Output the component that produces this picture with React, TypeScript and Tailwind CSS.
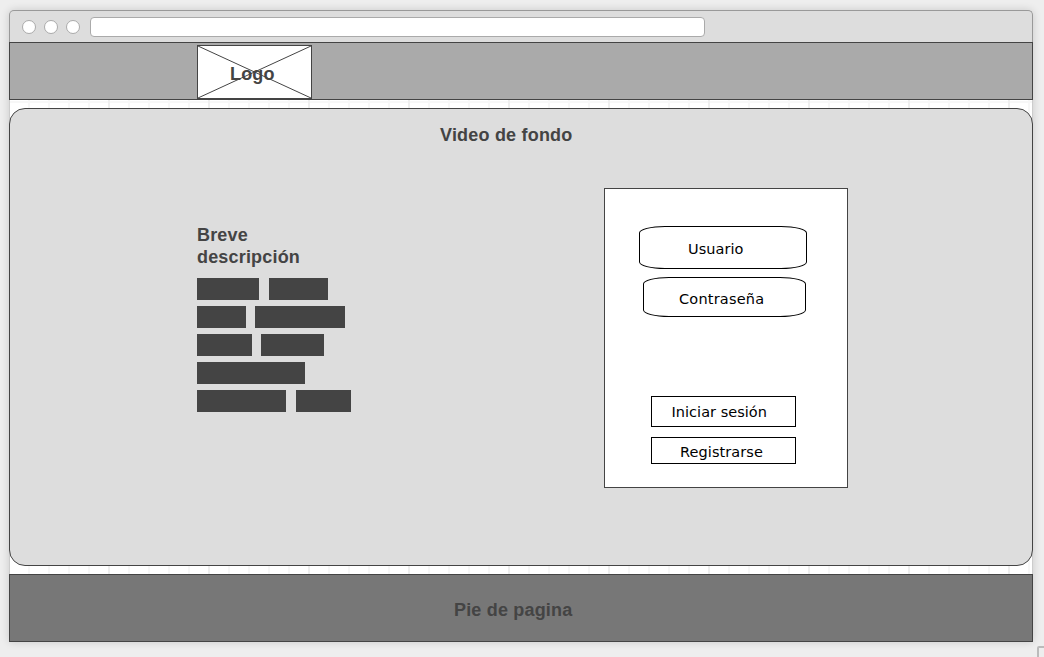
import type { ReactNode } from "react";

const heading = "font-['Liberation_Sans',sans-serif] text-[18px] font-bold leading-[22px] text-[#444444]";

const words: string[][] = [
  ["w-[62px]", "w-[59px] ml-[10px]"],
  ["w-[49px]", "w-[90px] ml-[9px]"],
  ["w-[55px]", "w-[63px] ml-[9px]"],
  ["w-[108px]"],
  ["w-[89px]", "w-[55px] ml-[10px]"],
];

function GridStrip({ top = false }: { top?: boolean }) {
  return (
    <svg className="block h-full w-full" shapeRendering="crispEdges">
      {top && <rect x="0" y="1" width="1022" height="2" fill="#f7f7f7" />}
      {Array.from({ length: 51 }, (_, i) => (
        <rect key={i} x={18 + i * 20} y="0" width="2" height="100%" fill={i % 5 === 4 ? "#eeeeee" : "#f7f7f7"} />
      ))}
    </svg>
  );
}

function Label({ children, className }: { children: ReactNode; className: string }) {
  return (
    <span className={`block whitespace-nowrap font-['DejaVu_Sans',sans-serif] text-[14.5px] leading-[18px] text-black ${className}`}>
      {children}
    </span>
  );
}

function TitleBar() {
  return (
    <div className="flex h-8 items-start rounded-t-[5px] border border-b-0 border-[#999999] bg-[#dddddd] pl-3">
      <div className="mt-[9px] flex gap-2">
        {[0, 1, 2].map((i) => (
          <span key={i} className="h-[14px] w-[14px] rounded-full border border-[#aaaaaa] bg-white" />
        ))}
      </div>
      <div className="ml-[10px] mt-[6px] h-5 w-[615px] rounded-[4px] border border-[#aaaaaa] bg-white" />
    </div>
  );
}

function Logo() {
  return (
    <div className="relative ml-[187px] mt-[2px] h-[54px] w-[115px] border border-[#444444] bg-white">
      <svg className="block h-full w-full" viewBox="0 0 113 52" preserveAspectRatio="none">
        <path d="M0 0L113 52M113 0L0 52" stroke="#444444" strokeWidth="1" />
      </svg>
      <span className={`absolute left-8 top-[17px] tracking-[0.15px] ${heading}`}>Logo</span>
    </div>
  );
}

function Description() {
  return (
    <section className="mt-[115px] w-[160px]">
      <h2 className={`tracking-[0.18px] ${heading}`}>
        Breve
        <br />
        descripción
      </h2>
      <div className="mt-[10px] flex flex-col gap-[6px]">
        {words.map((row, i) => (
          <div key={i} className="flex h-[22px]">
            {row.map((w, j) => (
              <span key={j} className={`bg-[#444444] ${w}`} />
            ))}
          </div>
        ))}
      </div>
    </section>
  );
}

function LoginCard() {
  return (
    <section className="ml-[247px] mt-[79px] h-[300px] w-[244px] border border-[#444444] bg-white">
      <div className="ml-[34px] mt-[37px] h-[43px] w-[168px] rounded-[26px/7px] border border-black pt-[13px]">
        <Label className="ml-[48px] tracking-[0.05px]">Usuario</Label>
      </div>
      <div className="ml-[38px] mt-2 h-10 w-[163px] rounded-[26px/7px] border border-black pt-[12px]">
        <Label className="ml-[35px] tracking-[0.2px]">Contraseña</Label>
      </div>
      <button className="ml-[46px] mt-[79px] block h-[31px] w-[145px] border border-black pt-[1px] text-left">
        <Label className="ml-[19.5px] tracking-[0.03px]">Iniciar sesión</Label>
      </button>
      <button className="ml-[46px] mt-[10px] block h-[27px] w-[145px] border border-black pt-[2px] text-left">
        <Label className="ml-[28px] tracking-[0.08px]">Registrarse</Label>
      </button>
    </section>
  );
}

export default function App() {
  return (
    <div className="relative h-[657px] w-[1044px] overflow-hidden bg-[#eeeeee] pl-[9px] pt-[10px]">
      <div className="h-[632px] w-[1024px] rounded-t-[5px] shadow-[0_0_8px_rgba(0,0,0,0.16)]">
        <TitleBar />
        <header className="h-[58px] border border-[#444444] bg-[#aaaaaa]">
          <Logo />
        </header>
        <div className="border-x border-[#cccccc] bg-white">
          <div className="h-4">
            <GridStrip top />
          </div>
          <div className="h-[442px]" />
          <div className="h-4">
            <GridStrip />
          </div>
        </div>
        <main className="relative -mt-[466px] flex h-[458px] items-start rounded-[16px] border border-[#444444] bg-[#dddddd] pl-[187px]">
          <h1 className={`absolute left-[430px] top-[15px] tracking-[0.2px] ${heading}`}>Video de fondo</h1>
          <Description />
          <LoginCard />
        </main>
        <footer className="mt-2 h-[68px] border border-[#444444] bg-[#777777] pl-[444px] pt-6">
          <p className={`tracking-[0.18px] ${heading}`}>Pie de pagina</p>
        </footer>
      </div>
      <div className="absolute left-[1037px] top-[646px] h-5 w-5 rounded-[2px] border-2 border-[#bbbbbb]" />
    </div>
  );
}
